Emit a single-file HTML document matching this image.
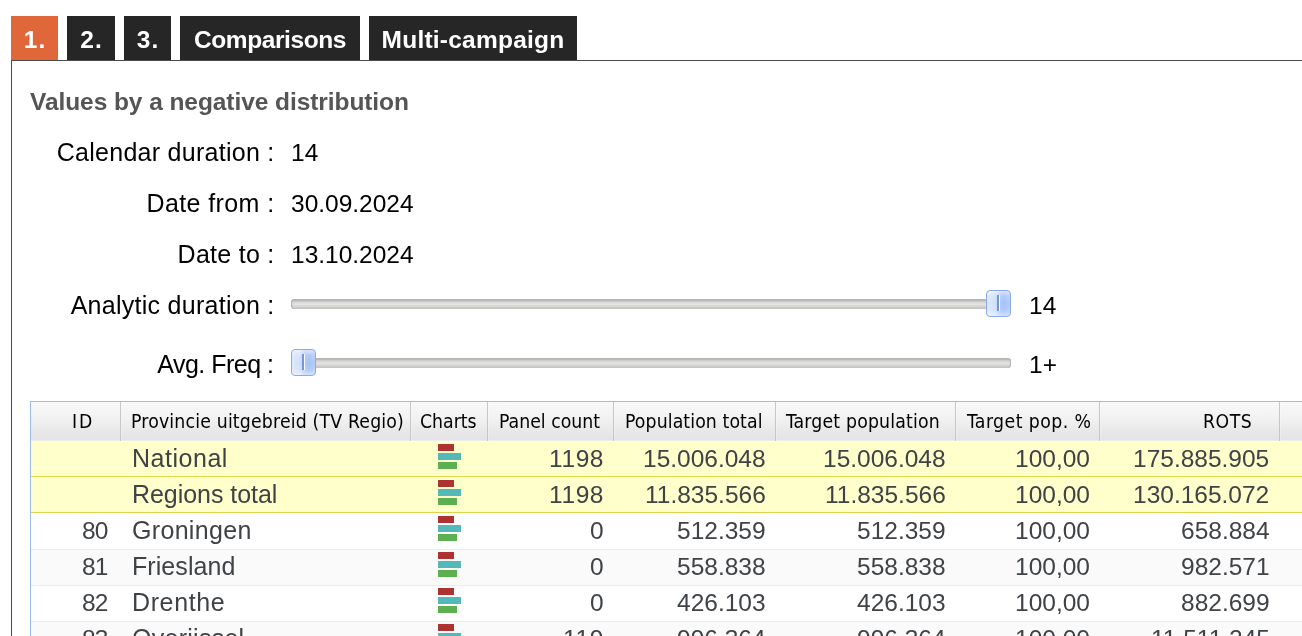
<!DOCTYPE html>
<html lang="en">
<head>
<meta charset="utf-8">
<title>Values by a negative distribution</title>
<style>
html,body{margin:0;padding:0;background:#fff;}
body{width:1302px;height:636px;overflow:hidden;position:relative;font-family:"Liberation Sans",sans-serif;font-size:24.5px;color:#000;}
/* tabs */
.tab{position:absolute;top:16px;height:44.1px;background:#262626;color:#fff;font-weight:bold;font-size:24.5px;line-height:48px;text-align:center;white-space:nowrap;overflow:hidden;}
.tab.on{background:#e0673a;}
.panel-top{position:absolute;left:11px;top:60.1px;width:1291px;height:1px;background:#4a4a4a;z-index:2;}
.panel-left{position:absolute;left:11.1px;top:60px;width:1.1px;height:576px;background:#4a4a4a;}
h2{position:absolute;margin:0;left:30px;top:87px;letter-spacing:-.07px;font-size:24.5px;line-height:30px;font-weight:bold;color:#555;white-space:nowrap;}
.lbl{position:absolute;left:0;width:274.5px;text-align:right;line-height:30px;white-space:nowrap;letter-spacing:.27px;font-size:25px;}
.val{position:absolute;left:291px;line-height:30px;white-space:nowrap;}
/* slider */
.track{position:absolute;left:291.1px;width:719.7px;height:10.9px;border-radius:3.5px;box-sizing:border-box;
 background:linear-gradient(#b6b1ad 0,#bab6b3 14%,#cdd0d3 27%,#dddcda 40%,#e6e3df 52%,#dcdbd9 64%,#ced1d3 80%,#c5c3c0 91%,#cbc8c4 100%);box-shadow:inset 1.2px 0 0 rgba(176,170,165,.8),inset -1.2px 0 0 rgba(176,170,165,.8);}
.thumb{position:absolute;width:24.6px;height:26.6px;box-sizing:border-box;border:1.7px solid #8aabe7;border-radius:4px;
 background:linear-gradient(180deg,rgba(255,255,255,.55) 0,rgba(255,255,255,.12) 22%,rgba(255,255,255,0) 50%,rgba(255,255,255,.1) 78%,rgba(255,255,255,.5) 100%),
 linear-gradient(90deg,#dde8fb 0,#cfdefa 38%,#b0c9f7 54%,#a6c2f6 75%,#b4ccf8 100%);}
.thumb:before{content:"";position:absolute;left:9.6px;top:3.6px;width:1.7px;height:16.6px;background:#7894d7;}
.thumb:after{content:"";position:absolute;left:11.3px;top:3.6px;width:1.3px;height:16.6px;background:#f6f9ff;}
/* grid */
.grid{position:absolute;left:0;top:0;width:1302px;height:636px;overflow:hidden;}
.gb-top{position:absolute;left:30px;top:401px;width:1272px;height:1px;background:#9dbde9;}
.gb-left{position:absolute;left:30px;top:401px;width:1px;height:236px;background:#9dbde9;z-index:3;}
.hdr{position:absolute;left:0;top:402px;width:1302px;height:39.2px;clip-path:inset(0 0 0 31px);background:linear-gradient(#f9f9f9 0,#f1f1f2 45%,#e8e8ea 75%,#e3e4e6 97%,#f4f4f0 100%);
 font-family:"DejaVu Sans Condensed","DejaVu Sans","Liberation Sans",sans-serif;font-size:19.25px;color:#000;}
.hdr span{position:absolute;top:0;line-height:39.2px;white-space:nowrap;}
.sep{position:absolute;top:0;width:1.2px;height:39.2px;background:#c6c6c6;}
.sep:after{content:"";position:absolute;left:1.2px;top:0;width:1.2px;height:39.2px;background:rgba(255,255,255,.25);}
.row{position:absolute;left:0;width:1302px;clip-path:inset(0 0 -1px 31px);height:36px;box-sizing:border-box;color:#3f4246;font-size:24.5px;background:#fff;}
.row:after{content:"";position:absolute;left:0;bottom:-.8px;width:100%;height:1px;background:#ececec;}
.row.alt{background:#fafafa;}
.row.y{background:#ffffcc;}
.row.y:after{bottom:.1px;height:1.4px;background:#dcd84c;}
.row.y + .row.y:before{content:"";position:absolute;left:0;top:0;width:100%;height:1px;background:rgba(255,255,250,.9);}
.row span{position:absolute;top:0;line-height:36px;white-space:nowrap;}
.row .r{text-align:right;}
.row .n{left:132.4px;font-size:25px;top:-1px;}
.ico{position:absolute;left:438px;top:3px;width:24px;height:26px;}
.ico i{position:absolute;left:0;height:7px;}
.ico i.a{top:0;width:15.8px;background:#ad3330;}
.ico i.b{top:8.8px;width:23px;background:#53b8b8;}
.ico i.c{top:17.8px;width:19.2px;background:#5db04f;}
.tab,h2,.lbl,.val,.hdr span,.row span{will-change:transform;}
</style>
</head>
<body>
<div class="tab on" style="left:11px;width:47px;letter-spacing:1px;text-indent:1px;">1.</div>
<div class="tab" style="left:67px;width:48px;letter-spacing:1px;text-indent:1px;">2.</div>
<div class="tab" style="left:124px;width:47px;letter-spacing:1px;text-indent:1px;">3.</div>
<div class="tab" style="left:180px;width:180px;letter-spacing:-.4px;">Comparisons</div>
<div class="tab" style="left:369px;width:208px;letter-spacing:.23px;">Multi-campaign</div>
<div class="panel-top"></div>
<div class="panel-left"></div>

<h2>Values by a negative distribution</h2>

<div class="lbl" style="top:136.8px;">Calendar duration :</div><div class="val" style="top:137.8px;">14</div>
<div class="lbl" style="top:187.8px;letter-spacing:.4px;">Date from :</div><div class="val" style="top:188.8px;">30.09.2024</div>
<div class="lbl" style="top:238.8px;">Date to :</div><div class="val" style="top:239.8px;">13.10.2024</div>
<div class="lbl" style="top:289.8px;">Analytic duration :</div>
<div class="track" style="top:298.5px;"></div><div class="thumb" style="left:986.3px;top:290.2px;"></div>
<div class="val" style="top:290.8px;left:1029px;">14</div>
<div class="lbl" style="top:348.6px;letter-spacing:-.5px;width:273.5px;">Avg. Freq :</div>
<div class="track" style="top:357.5px;"></div><div class="thumb" style="left:291.3px;top:349px;"></div>
<div class="val" style="top:349.6px;left:1029px;">1+</div>

<div class="grid">
 <div class="gb-top"></div><div class="gb-left"></div>
 <div class="hdr">
  <span style="left:72.3px;letter-spacing:2px;">ID</span>
  <span style="left:131.4px;letter-spacing:.18px;">Provincie uitgebreid (TV Regio)</span>
  <span style="left:420.4px;">Charts</span>
  <span style="left:498.7px;">Panel count</span>
  <span style="left:624.5px;letter-spacing:.1px;">Population total</span>
  <span style="left:786.4px;letter-spacing:.18px;">Target population</span>
  <span style="left:967.2px;letter-spacing:.44px;">Target pop. %</span>
  <span style="left:1203.4px;letter-spacing:.5px;">ROTS</span>
  <i class="sep" style="left:119.9px;"></i><i class="sep" style="left:409.8px;"></i><i class="sep" style="left:486.9px;"></i><i class="sep" style="left:612.8px;"></i>
  <i class="sep" style="left:774.9px;"></i><i class="sep" style="left:954.9px;"></i><i class="sep" style="left:1098.9px;"></i><i class="sep" style="left:1278.9px;"></i>
 </div>
 <div class="row y" style="top:441.2px;z-index:9;">
  <span class="n" style="letter-spacing:0.52px;">National</span>
  <b class="ico"><i class="a"></i><i class="b"></i><i class="c"></i></b>
  <span class="r" style="right:697.9px;letter-spacing:.6px;">1198</span>
  <span class="r" style="right:536.7px;">15.006.048</span>
  <span class="r" style="right:356.7px;">15.006.048</span>
  <span class="r" style="right:212.5px;">100,00</span>
  <span class="r" style="right:32.5px;">175.885.905</span>
 </div>
 <div class="row y" style="top:477.2px;z-index:8;">
  <span class="n" style="letter-spacing:-0.05px;">Regions total</span>
  <b class="ico"><i class="a"></i><i class="b"></i><i class="c"></i></b>
  <span class="r" style="right:697.9px;letter-spacing:.6px;">1198</span>
  <span class="r" style="right:536.7px;">11.835.566</span>
  <span class="r" style="right:356.7px;">11.835.566</span>
  <span class="r" style="right:212.5px;">100,00</span>
  <span class="r" style="right:32.5px;">130.165.072</span>
 </div>
 <div class="row " style="top:513.2px;z-index:7;">
  <span class="r" style="right:1195.0px;letter-spacing:-1px;">80</span>
  <span class="n" style="letter-spacing:0.32px;">Groningen</span>
  <b class="ico"><i class="a"></i><i class="b"></i><i class="c"></i></b>
  <span class="r" style="right:698.5px;">0</span>
  <span class="r" style="right:536.7px;">512.359</span>
  <span class="r" style="right:356.7px;">512.359</span>
  <span class="r" style="right:212.5px;">100,00</span>
  <span class="r" style="right:32.5px;">658.884</span>
 </div>
 <div class="row alt" style="top:549.2px;z-index:6;">
  <span class="r" style="right:1195.0px;letter-spacing:-1px;">81</span>
  <span class="n" style="letter-spacing:0.07px;">Friesland</span>
  <b class="ico"><i class="a"></i><i class="b"></i><i class="c"></i></b>
  <span class="r" style="right:698.5px;">0</span>
  <span class="r" style="right:536.7px;">558.838</span>
  <span class="r" style="right:356.7px;">558.838</span>
  <span class="r" style="right:212.5px;">100,00</span>
  <span class="r" style="right:32.5px;">982.571</span>
 </div>
 <div class="row " style="top:585.2px;z-index:5;">
  <span class="r" style="right:1195.0px;letter-spacing:-1px;">82</span>
  <span class="n" style="letter-spacing:0.62px;">Drenthe</span>
  <b class="ico"><i class="a"></i><i class="b"></i><i class="c"></i></b>
  <span class="r" style="right:698.5px;">0</span>
  <span class="r" style="right:536.7px;">426.103</span>
  <span class="r" style="right:356.7px;">426.103</span>
  <span class="r" style="right:212.5px;">100,00</span>
  <span class="r" style="right:32.5px;">882.699</span>
 </div>
 <div class="row alt" style="top:621.2px;z-index:4;">
  <span class="r" style="right:1195.0px;letter-spacing:-1px;">83</span>
  <span class="n" style="letter-spacing:0.27px;">Overijssel</span>
  <b class="ico"><i class="a"></i><i class="b"></i><i class="c"></i></b>
  <span class="r" style="right:697.9px;letter-spacing:.6px;">119</span>
  <span class="r" style="right:536.7px;">996.364</span>
  <span class="r" style="right:356.7px;">996.364</span>
  <span class="r" style="right:212.5px;">100,00</span>
  <span class="r" style="right:32.5px;">11.511.245</span>
 </div>

</div>
</body>
</html>
